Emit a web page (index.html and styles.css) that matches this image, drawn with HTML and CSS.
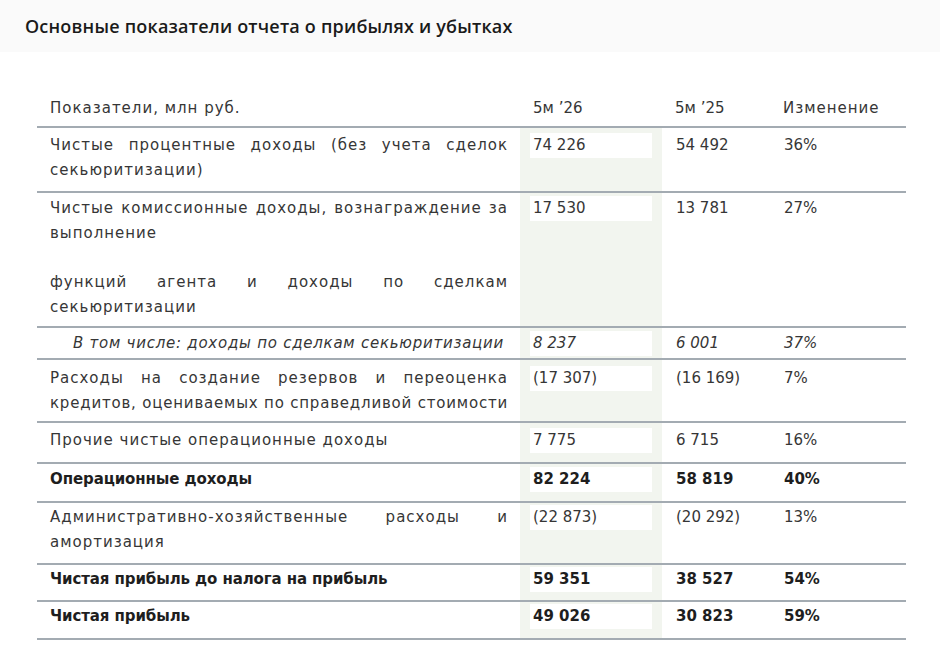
FILE: index.html
```html
<!DOCTYPE html>
<html lang="ru">
<head>
<meta charset="utf-8">
<title>Основные показатели</title>
<link rel="stylesheet" href="styles.css">
</head>
<body>
<div class="topband">
  <h1 class="title">Основные показатели отчета о прибылях и убытках</h1>
</div>
<div class="wrap">
<table class="pl">
  <colgroup>
    <col class="c-label"><col class="c-cur"><col class="c-prev"><col class="c-chg">
  </colgroup>
  <thead>
    <tr>
      <th class="label">Показатели, млн руб.</th>
      <th class="num">5м ’26</th>
      <th class="num">5м ’25</th>
      <th>Изменение</th>
    </tr>
  </thead>
  <tbody>
    <tr class="r1">
      <td class="label"><span class="jl">Чистые процентные доходы (без учета сделок</span><span class="ll">секьюритизации)</span></td>
      <td class="cur"><span class="box">74 226</span></td>
      <td class="num">54 492</td>
      <td class="num">36%</td>
    </tr>
    <tr class="r2">
      <td class="label"><span class="jl">Чистые комиссионные доходы, вознаграждение за</span><span class="ll">выполнение</span><span class="jl gap">функций агента и доходы по сделкам</span><span class="ll">секьюритизации</span></td>
      <td class="cur"><span class="box">17 530</span></td>
      <td class="num">13 781</td>
      <td class="num">27%</td>
    </tr>
    <tr class="it r3">
      <td class="label sub">В том числе: доходы по сделкам секьюритизации</td>
      <td class="cur"><span class="box">8 237</span></td>
      <td class="num">6 001</td>
      <td class="num">37%</td>
    </tr>
    <tr class="r4">
      <td class="label"><span class="jl">Расходы на создание резервов и переоценка</span><span class="ll fit">кредитов, оцениваемых по справедливой стоимости</span></td>
      <td class="cur"><span class="box">(17 307)</span></td>
      <td class="num">(16 169)</td>
      <td class="num">7%</td>
    </tr>
    <tr class="r5">
      <td class="label">Прочие чистые операционные доходы</td>
      <td class="cur"><span class="box">7 775</span></td>
      <td class="num">6 715</td>
      <td class="num">16%</td>
    </tr>
    <tr class="b r6">
      <td class="label">Операционные доходы</td>
      <td class="cur"><span class="box">82 224</span></td>
      <td class="num">58 819</td>
      <td class="num">40%</td>
    </tr>
    <tr class="r7">
      <td class="label"><span class="jl">Административно-хозяйственные расходы и</span><span class="ll">амортизация</span></td>
      <td class="cur"><span class="box">(22 873)</span></td>
      <td class="num">(20 292)</td>
      <td class="num">13%</td>
    </tr>
    <tr class="b r8">
      <td class="label">Чистая прибыль до налога на прибыль</td>
      <td class="cur"><span class="box">59 351</span></td>
      <td class="num">38 527</td>
      <td class="num">54%</td>
    </tr>
    <tr class="b r9">
      <td class="label">Чистая прибыль</td>
      <td class="cur"><span class="box">49 026</span></td>
      <td class="num">30 823</td>
      <td class="num">59%</td>
    </tr>
  </tbody>
</table>
</div>
</body>
</html>
```
FILE: styles.css
```css
html, body {
  margin: 0;
  padding: 0;
  background: #ffffff;
  font-family: "DejaVu Sans", "Liberation Sans", sans-serif;
  color: #363636;
}
.topband {
  background: #fafafa;
  height: 52px;
  padding: 0 0 0 25px;
  display: flex;
  align-items: center;
}
.title {
  margin: 0;
  font-family: "Open Sans", "DejaVu Sans", sans-serif;
  font-size: 18px;
  font-weight: 600;
  color: #1a1a1a;
  letter-spacing: 0.2px;
}
.wrap {
  padding: 38px 0 0 37px;
}
.pl {
  border-collapse: collapse;
  width: 869px;
  table-layout: fixed;
  font-size: 15px;
  line-height: 25px;
  letter-spacing: 1px;
}
.c-label { width: 483px; }
.c-cur { width: 142px; }
.c-prev { width: 108px; }
.c-chg { width: 136px; }
.pl th {
  font-weight: 400;
  text-align: left;
  padding: 6px 0 5px 13px;
  border-bottom: 2px solid #a3abb2;
}
.pl td {
  vertical-align: top;
  padding: 6px 0 6px 14px;
  border-bottom: 2px solid #a3abb2;
}
.pl .num { letter-spacing: 0; }
.pl td.label {
  padding-left: 13px;
  padding-right: 12px;
  text-align: left;
}
.jl {
  display: block;
  text-align: justify;
  text-align-last: justify;
}
.ll {
  display: block;
  text-align: left;
  white-space: nowrap;
}
.ll.fit { letter-spacing: 0.8px; }
.gap { margin-top: 24px; }
.pl td.cur {
  background: #f2f5ef;
  padding-left: 10px;
  padding-right: 10px;
  letter-spacing: 0;
}
.box {
  display: block;
  background: #ffffff;
  padding: 0 0 0 3px;
  line-height: 25px;
}
.it td { font-style: italic; }
.pl td.sub {
  padding-left: 36px;
  white-space: nowrap;
  letter-spacing: 0.75px;
}
.b td {
  font-weight: 700;
  color: #1e1e1e;
  letter-spacing: 0;
}
.pl .b td.label { letter-spacing: -0.1px; }

.pl .r1 td { padding-top: 5px; padding-bottom: 8px; }
.pl .r2 td { padding-top: 3px; padding-bottom: 6px; }
.pl .r3 td { padding-top: 3px; padding-bottom: 2px; }
.pl .r4 td { padding-top: 6px; padding-bottom: 5px; }
.pl .r5 td { padding-top: 5px; padding-bottom: 9px; }
.pl .r6 td { padding-top: 3px; padding-bottom: 9px; }
.pl .r7 td { padding-top: 2px; padding-bottom: 8px; }
.pl .r8 td { padding-top: 2px; padding-bottom: 8px; }
.pl .r9 td { padding-top: 2px; padding-bottom: 9px; }
```
